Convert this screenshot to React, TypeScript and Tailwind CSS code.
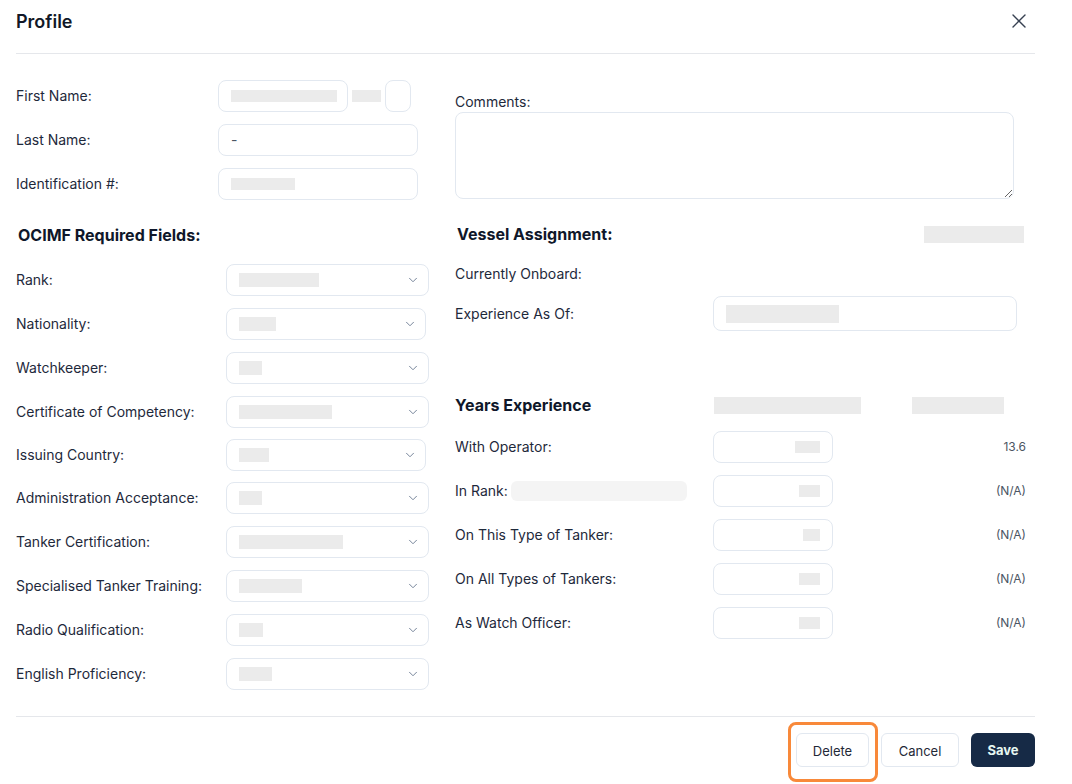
import React from "react";
import { ChevronDown, X } from "lucide-react";

type SelectRow = { label: string; w: number; bw: number; mt: string };

const selects: SelectRow[] = [
  { label: "Rank:", w: 203, bw: 80, mt: "" },
  { label: "Nationality:", w: 200, bw: 37, mt: "mt-3" },
  { label: "Watchkeeper:", w: 203, bw: 23, mt: "mt-3" },
  { label: "Certificate of Competency:", w: 203, bw: 93, mt: "mt-3" },
  { label: "Issuing Country:", w: 200, bw: 30, mt: "mt-[11px]" },
  { label: "Administration Acceptance:", w: 203, bw: 23, mt: "mt-[11px]" },
  { label: "Tanker Certification:", w: 203, bw: 104, mt: "mt-3" },
  { label: "Specialised Tanker Training:", w: 203, bw: 63, mt: "mt-3" },
  { label: "Radio Qualification:", w: 203, bw: 24, mt: "mt-3" },
  { label: "English Proficiency:", w: 203, bw: 33, mt: "mt-3" },
];

type ExpRow = { label: string; bw: number; value: string; rank?: boolean };
const expRows: ExpRow[] = [
  { label: "With Operator:", bw: 25, value: "13.6" },
  { label: "In Rank:", bw: 21, value: "(N/A)", rank: true },
  { label: "On This Type of Tanker:", bw: 17, value: "(N/A)" },
  { label: "On All Types of Tankers:", bw: 21, value: "(N/A)" },
  { label: "As Watch Officer:", bw: 21, value: "(N/A)" },
];

function Blk({ w, h }: { w: number; h: number }) {
  return <div className="bg-[#ebebeb] shrink-0" style={{ width: w, height: h }} />;
}

export default function App() {
  return (
    <div className="w-[1072px] h-[784px] bg-white overflow-hidden font-['Inter',sans-serif] text-[#1e293b]">
      <div className="ml-4 w-[1019px]">
        {/* header */}
        <div className="h-[54px] flex items-start justify-between border-b border-[#e5e7eb]">
          <h1 className="pt-2 leading-7 text-[18px] font-semibold text-[#111827]">Profile</h1>
          <button className="mt-[9px] mr-1 text-[#374151]">
            <X size={24} strokeWidth={1.4} />
          </button>
        </div>

        {/* body */}
        <div className="flex pt-[26px] pb-[26px]">
          {/* left column */}
          <div className="w-[414px] flex flex-col">
            <div className="flex flex-col gap-3">
              <div className="flex items-center h-8">
                <div className="w-[202px] text-sm">First Name:</div>
                <div className="w-[130px] h-8 rounded-lg border border-[#e2e8f0] flex items-center px-3">
                  <Blk w={106} h={12} />
                </div>
                <div className="ml-1">
                  <Blk w={29} h={12} />
                </div>
                <div className="ml-1 w-[26px] h-8 rounded-lg border border-[#e2e8f0]" />
              </div>
              <div className="flex items-center h-8">
                <div className="w-[202px] text-sm">Last Name:</div>
                <div className="w-[200px] h-8 rounded-lg border border-[#e2e8f0] flex items-center px-3 text-sm text-[#4b5563]">
                  -
                </div>
              </div>
              <div className="flex items-center h-8">
                <div className="w-[202px] text-sm">Identification #:</div>
                <div className="w-[200px] h-8 rounded-lg border border-[#e2e8f0] flex items-center px-3">
                  <Blk w={64} h={12} />
                </div>
              </div>
            </div>

            <h2 className="mt-[23px] h-6 leading-6 pl-[2px] text-base font-bold text-[#0f172a]">
              OCIMF Required Fields:
            </h2>

            <div className="mt-[17px] flex flex-col">
              {selects.map((s) => (
                <div key={s.label} className={`flex items-center h-8 ${s.mt}`}>
                  <div className="w-[210px] text-sm">{s.label}</div>
                  <div
                    className="h-8 rounded-lg border border-[#e2e8f0] flex items-center justify-between pl-3 pr-2"
                    style={{ width: s.w }}
                  >
                    <Blk w={s.bw} h={14} />
                    <ChevronDown size={14} strokeWidth={1.5} className="text-[#64748b]" />
                  </div>
                </div>
              ))}
            </div>
          </div>

          {/* right column */}
          <div className="ml-[25px] w-[580px] flex flex-col pt-3">
            <div className="text-sm leading-5">Comments:</div>
            <textarea className="block w-[559px] h-[87px] rounded-lg border border-[#e2e8f0] outline-none resize-y" />

            <div className="mt-[23px] h-6 w-[569px] flex items-center justify-between pl-[2px]">
              <h2 className="text-base font-bold leading-6 text-[#0f172a]">Vessel Assignment:</h2>
              <Blk w={100} h={17} />
            </div>

            <div className="mt-[18px] text-sm leading-5">Currently Onboard:</div>

            <div className="mt-3 flex items-center h-[35px]">
              <div className="w-[258px] text-sm">Experience As Of:</div>
              <div className="w-[304px] h-[35px] rounded-lg border border-[#e2e8f0] flex items-center px-3">
                <Blk w={113} h={18} />
              </div>
            </div>

            <div className="mt-[62px] h-6 flex items-center">
              <h2 className="w-[259px] text-base font-bold leading-6 text-[#0f172a]">Years Experience</h2>
              <Blk w={147} h={17} />
              <div className="ml-[51px]">
                <Blk w={92} h={17} />
              </div>
            </div>

            <div className="mt-[14px] flex flex-col gap-3 w-[571px]">
              {expRows.map((r) => (
                <div key={r.label} className="flex items-center h-8">
                  <div className="w-[258px] flex items-center text-sm">
                    <span>{r.label}</span>
                    {r.rank && <div className="ml-[3px] w-[176px] h-5 rounded-md bg-[#f4f4f4]" />}
                  </div>
                  <div className="w-[120px] h-8 rounded-lg border border-[#e2e8f0] flex items-center justify-end pr-3">
                    <Blk w={r.bw} h={12} />
                  </div>
                  <div className="flex-1 text-right text-xs text-[#4b5563]">{r.value}</div>
                </div>
              ))}
            </div>
          </div>
        </div>

        {/* footer */}
        <div className="border-t border-[#e5e7eb] pt-4 flex justify-end gap-3">
          <div className="relative">
            <div className="absolute -left-2 -right-[9px] -top-[11px] -bottom-[15px] border-[3px] border-[#f8893a] rounded-lg pointer-events-none" />
            <button className="w-[73px] h-[34px] rounded-md border border-[#e2e8f0] bg-white text-[13px] leading-[34px] text-[#1f2937]">
              Delete
            </button>
          </div>
          <button className="w-[78px] h-[34px] rounded-md border border-[#e2e8f0] bg-white text-[13px] leading-[34px] text-[#1f2937]">
            Cancel
          </button>
          <button className="w-[64px] h-[34px] rounded-md bg-[#162a46] text-[13px] leading-[34px] font-bold text-[#e6f7f1]">
            Save
          </button>
        </div>
      </div>
    </div>
  );
}
